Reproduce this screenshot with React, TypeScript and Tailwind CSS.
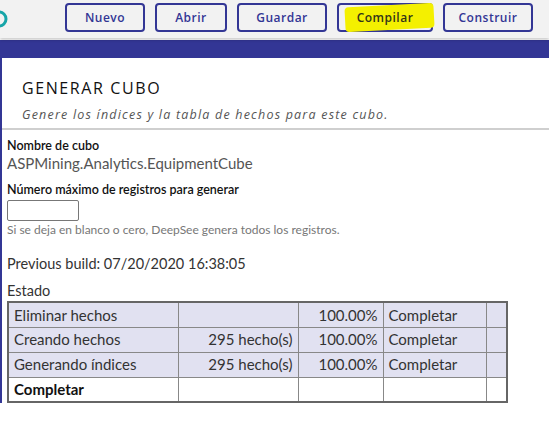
const buttons = ['Nuevo', 'Abrir', 'Guardar', 'Compilar', 'Construir'];

const rows = [
  { step: 'Eliminar hechos', count: '', pct: '100.00%', status: 'Completar' },
  { step: 'Creando hechos', count: '295 hecho(s)', pct: '100.00%', status: 'Completar' },
  { step: 'Generando índices', count: '295 hecho(s)', pct: '100.00%', status: 'Completar' },
];

export default function App() {
  return (
    <div className="h-[423px] w-[549px] overflow-hidden bg-white font-['Lato',sans-serif]">
      {/* toolbar */}
      <div className="relative h-[38px] bg-[#f2f2f2] shadow-[0_2px_3px_rgba(0,0,0,0.2)]">
        <svg className="absolute left-[-10px] top-[10px]" width="18" height="18" viewBox="0 0 18 18">
          <circle cx="9" cy="9" r="7" fill="#f2f2f2" stroke="#17a5a8" strokeWidth="3" />
        </svg>
        <div className="flex gap-[10px] pl-[65px] pt-[3px]">
          {buttons.map((b) => (
            <button
              key={b}
              className={`flex h-[29px] items-center justify-center rounded-[4px] border-2 border-[#333695] text-[12px] font-semibold tracking-[0.5px] text-[#333695] font-['Open_Sans',sans-serif] ${
                b === 'Nuevo'
                  ? 'w-[80px]'
                  : b === 'Abrir'
                  ? 'w-[72px]'
                  : b === 'Guardar'
                  ? 'w-[90px]'
                  : b === 'Compilar'
                  ? 'w-[96px]'
                  : 'w-[90px]'
              }`}
            >
              {b === 'Compilar' ? (
                <span className="relative text-[#33331a]">
                  <span className="absolute left-[-12px] right-[-20px] top-[-4px] bottom-[-3px] -rotate-[3deg] rounded-[4px] bg-[#f4f000]" />
                  <span className="relative">{b}</span>
                </span>
              ) : (
                b
              )}
            </button>
          ))}
        </div>
      </div>

      <div className="mt-[2px] h-[18px] bg-[#333695]" />

      <div className="border-l-[2px] border-[#333695]">
        <div className="border-b-2 border-[#cfcfcf] pb-[5px]">
          <h1 className="pl-[20px] pt-[20px] font-['Open_Sans',sans-serif] text-[16px] leading-[20px] tracking-[1.6px] text-[#111]">
            GENERAR CUBO
          </h1>
          <p className="mt-[9px] pl-[20px] font-['Open_Sans',sans-serif] text-[12.5px] italic leading-[16px] tracking-[1.2px] text-[#555]">
            Genere los índices y la tabla de hechos para este cubo.
          </p>
        </div>

        <div className="px-[5px] pt-[8px]">
          <div className="text-[12.5px] font-semibold leading-[15px] text-[#111]">Nombre de cubo</div>
          <div className="text-[15px] leading-[20px] text-[#555]">ASPMining.Analytics.EquipmentCube</div>
          <div className="mt-[9px] text-[12.5px] font-semibold leading-[15px] text-[#111]">
            Número máximo de registros para generar
          </div>
          <input className="mt-[3px] block h-[21px] w-[72px] rounded-[2px] border border-[#777] bg-white" />
          <div className="mt-[1px] text-[12px] leading-[15px] text-[#777]">
            Si se deja en blanco o cero, DeepSee genera todos los registros.
          </div>
          <div className="mt-[18px] text-[14.5px] leading-[18px] text-[#333]">Previous build: 07/20/2020 16:38:05</div>
          <div className="mt-[9px] text-[14.5px] leading-[17px] text-[#333]">Estado</div>

          <table className="mt-[2px] border-collapse border-2 border-[#666] text-[15px] text-[#333]">
            <tbody>
              {rows.map((r) => (
                <tr key={r.step} className="h-[25px] bg-[#e1e1f1]">
                  <td className="w-[170px] border border-[#888] px-[5px]">{r.step}</td>
                  <td className="w-[120px] border border-[#888] px-[5px] text-right">{r.count}</td>
                  <td className="w-[85px] border border-[#888] px-[5px] text-right">{r.pct}</td>
                  <td className="w-[103px] border border-[#888] px-[5px]">{r.status}</td>
                  <td className="w-[21px] border border-[#888]" />
                </tr>
              ))}
              <tr className="h-[25px] bg-white">
                <td className="border border-[#888] px-[5px] font-bold text-[#111]">Completar</td>
                <td className="border border-[#888]" />
                <td className="border border-[#888]" />
                <td className="border border-[#888]" />
                <td className="border border-[#888]" />
              </tr>
            </tbody>
          </table>
        </div>
      </div>
    </div>
  );
}
